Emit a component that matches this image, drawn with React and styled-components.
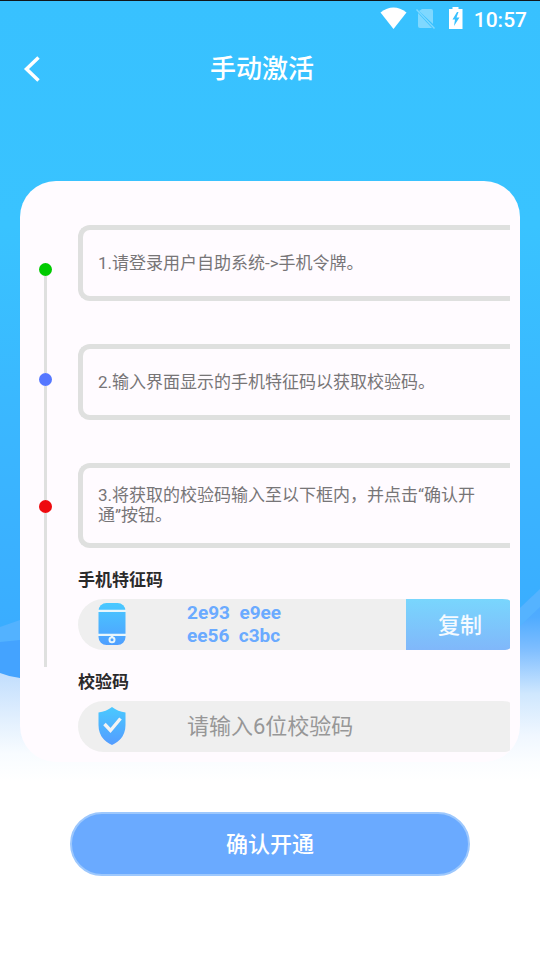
import React, { useState } from 'react';
import styled, { createGlobalStyle } from 'styled-components';

const GlobalStyle = createGlobalStyle`
  *, *::before, *::after {
    box-sizing: border-box;
  }

  body {
    margin: 0;
    background: #ffffff;
    font-family: Roboto, 'Noto Sans CJK SC', sans-serif;
  }

  h1, p, ol {
    margin: 0;
    padding: 0;
  }

  button, input {
    font-family: inherit;
  }
`;

const STEPS = [
  '1.请登录用户自助系统->手机令牌。',
  '2.输入界面显示的手机特征码以获取校验码。',
  '3.将获取的校验码输入至以下框内，并点击“确认开通”按钮。',
];

const FEATURE_CODE = ['2e93  e9ee', 'ee56  c3bc'];

function Scenery() {
  return (
    <Backdrop viewBox="0 0 540 800" preserveAspectRatio="none" aria-hidden="true">
      <defs>
        <linearGradient id="sky" x1="0" y1="0" x2="0" y2="1">
          <stop offset="0" stopColor="#38c1ff" />
          <stop offset="0.28" stopColor="#39c3ff" />
          <stop offset="0.5" stopColor="#3ab8ff" />
          <stop offset="0.78" stopColor="#3aadff" />
          <stop offset="1" stopColor="#3aadff" />
        </linearGradient>
        <linearGradient id="mist" gradientUnits="userSpaceOnUse" x1="0" y1="670" x2="0" y2="780">
          <stop offset="0" stopColor="#c0ddfd" />
          <stop offset="0.4" stopColor="#dfeefe" />
          <stop offset="0.75" stopColor="#f8fcff" />
          <stop offset="1" stopColor="#ffffff" />
        </linearGradient>
        <linearGradient id="slope" gradientUnits="userSpaceOnUse" x1="0" y1="590" x2="0" y2="780">
          <stop offset="0" stopColor="#45a7ff" />
          <stop offset="0.14" stopColor="#50acff" />
          <stop offset="0.3" stopColor="#7dbdff" />
          <stop offset="0.54" stopColor="#cfe7fe" />
          <stop offset="0.76" stopColor="#f0f7ff" />
          <stop offset="0.9" stopColor="#fbfdff" />
          <stop offset="1" stopColor="#ffffff" />
        </linearGradient>
      </defs>
      <rect width="540" height="800" fill="url(#sky)" />
      <path d="M0 626 L20 619 L270 560 V700 H0 Z" fill="#53b2ff" />
      <path d="M0 641 L20 639 L270 630 V720 H0 Z" fill="#44a3ff" />
      <path d="M0 672 Q10 676 20 677 L300 720 V800 H0 Z" fill="url(#mist)" />
      <path d="M270 800 V700 L520 607 L532 595 H540 V800 Z" fill="url(#slope)" />
      <path d="M520 607 L540 588 V606 L520 625 Z" fill="#55b3ff" />
    </Backdrop>
  );
}

function StatusIcons() {
  return (
    <svg width="84" height="28" viewBox="0 0 84 28" aria-hidden="true">
      <path d="M0.500 6.500 Q13.500 -3.500 26.500 6.500 L13.500 23 Z" fill="#ffffff" />
      <g fill="#7fd8ff">
        <path d="M42 3 H51 Q53 3 53 5 V18 L39 5 Z" />
        <path d="M38 7 L52 22 H40 Q38 22 38 20 Z" />
        <path d="M36 4 L37 3 L55 22 L54 23 Z" />
      </g>
      <path
        fillRule="evenodd"
        d="M72.500 1 H78.500 V3 H82.500 V23 H69 V3 H72.500 Z M77 6 L72.500 13.500 H75 L74 20 L79.500 11.500 H76.500 L78.500 6 Z"
        fill="#ffffff"
      />
    </svg>
  );
}

function PhoneIcon() {
  return (
    <svg width="28" height="44" viewBox="0 0 28 44" aria-hidden="true">
      <defs>
        <linearGradient id="phoneFill" x1="0" y1="0" x2="0" y2="1">
          <stop offset="0" stopColor="#49c9ff" />
          <stop offset="1" stopColor="#4f9fff" />
        </linearGradient>
      </defs>
      <rect x="0.500" y="1" width="27" height="42" rx="8" fill="url(#phoneFill)" />
      <path d="M0 8.800 H28 M0 32.800 H28" stroke="#e8f6fc" strokeWidth="2.200" />
      <path d="M14 33.500 V36" stroke="#e8f6fc" strokeWidth="2" />
      <circle cx="14" cy="37.800" r="2.500" fill="none" stroke="#e8f6fc" strokeWidth="2" />
    </svg>
  );
}

function ShieldIcon() {
  return (
    <svg width="28" height="40" viewBox="0 0 28 40" aria-hidden="true">
      <defs>
        <linearGradient id="shieldFill" x1="0" y1="0" x2="0" y2="1">
          <stop offset="0" stopColor="#49c9ff" />
          <stop offset="1" stopColor="#549cff" />
        </linearGradient>
      </defs>
      <path
        d="M14 1 Q20 5.500 27.500 6.500 V19 C27.500 29 22 35.500 14 39 C6 35.500 0.500 29 0.500 19 V6.500 Q8 5.500 14 1 Z"
        fill="url(#shieldFill)"
      />
      <path d="M6.500 18 L12.500 24.500 L22.500 12.500" fill="none" stroke="#f3f3f3" strokeWidth="3.400" />
    </svg>
  );
}

export default function App() {
  const [code, setCode] = useState('');

  const copyCode = () => {
    if (navigator.clipboard) {
      navigator.clipboard.writeText(FEATURE_CODE.join(' ').replace(/\s+/g, ''));
    }
  };

  return (
    <>
      <GlobalStyle />
      <Page>
        <Scenery />
        <StatusBar>
          <StatusIcons />
          <time>10:57</time>
        </StatusBar>
        <Header>
          <BackButton type="button" aria-label="返回">
            <svg width="18" height="28" viewBox="0 0 18 28" aria-hidden="true">
              <path
                d="M15.500 2.500 L3.500 14 L15.500 25.500"
                fill="none"
                stroke="#ffffff"
                strokeWidth="3.500"
              />
            </svg>
          </BackButton>
          <Title>手动激活</Title>
        </Header>

        <Form onSubmit={(e) => e.preventDefault()}>
          <Card>
            <Timeline aria-hidden="true">
              <Dot $color="#00cb00" />
              <Rail $length={97} />
              <Dot $color="#5577ff" />
              <Rail $length={114} />
              <Dot $color="#ee0a0e" />
              <Rail $length={154} />
            </Timeline>
            <Content>
              <Steps>
                {STEPS.map((text) => (
                  <Step key={text}>{text}</Step>
                ))}
              </Steps>

              <Label as="p">手机特征码</Label>
              <Field>
                <PhoneIcon />
                <FeatureCode>{FEATURE_CODE.join('\n')}</FeatureCode>
                <CopyButton type="button" onClick={copyCode}>复制</CopyButton>
              </Field>

              <Label htmlFor="verify">校验码</Label>
              <Field>
                <ShieldIcon />
                <CodeInput
                  id="verify"
                  placeholder="请输入6位校验码"
                  maxLength={6}
                  value={code}
                  onChange={(e) => setCode(e.target.value)}
                />
              </Field>
            </Content>
          </Card>
          <SubmitButton type="submit">确认开通</SubmitButton>
        </Form>
      </Page>
    </>
  );
}

const Page = styled.main`
  position: relative;
  isolation: isolate;
  min-height: 100vh;
  border-top: 1px solid #10161c;
`;

const Backdrop = styled.svg`
  position: absolute;
  top: 0;
  left: 0;
  z-index: -1;
  width: 100%;
  height: 800px;
`;

const StatusBar = styled.div`
  display: flex;
  align-items: center;
  justify-content: flex-end;
  gap: 10px;
  height: 38px;
  padding: 0 13px;
  color: #ffffff;
  font-size: 21px;
  font-weight: 500;
  line-height: 24px;
`;

const Header = styled.header`
  display: grid;
  grid-template-columns: 56px 1fr 72px;
  align-items: center;
  height: 60px;
  color: #ffffff;
`;

const BackButton = styled.button`
  display: flex;
  align-items: center;
  height: 60px;
  padding: 0 0 0 23px;
  border: none;
  background: none;
  cursor: pointer;
`;

const Title = styled.h1`
  font-size: 26px;
  font-weight: 500;
  line-height: 36px;
  text-align: center;
`;

const Form = styled.form`
  display: flex;
  flex-direction: column;
  gap: 50px;
  padding: 82px 20px;
`;

const Card = styled.div`
  display: flex;
  gap: 26px;
  padding: 44px 10px 10px 19px;
  border-radius: 36px;
  background: #fffbff;
`;

const Timeline = styled.div`
  display: flex;
  flex: none;
  flex-direction: column;
  align-items: center;
  width: 13px;
  padding-top: 38px;
`;

const Dot = styled.span`
  width: 13px;
  height: 13px;
  border-radius: 50%;
  background: ${({ $color }) => $color};
`;

const Rail = styled.span`
  width: 3px;
  height: ${({ $length }) => $length}px;
  background: #dfe0df;
`;

const Content = styled.div`
  flex: 1;
  min-width: 0;
`;

const Steps = styled.ol`
  display: flex;
  flex-direction: column;
  gap: 43px;
  list-style: none;
`;

const Step = styled.li`
  display: flex;
  align-items: center;
  min-height: 76px;
  padding: 17px 24px 18px 15px;
  border: 5px solid #dfe0df;
  border-right: none;
  border-radius: 12px 0 0 12px;
  color: #777577;
  font-size: 17px;
  line-height: 20px;
`;

const Label = styled.label`
  display: block;
  padding: 20px 0 7px;
  color: #2b2a2b;
  font-size: 17px;
  font-weight: 700;
  line-height: 24px;
`;

const Field = styled.div`
  display: flex;
  align-items: center;
  height: 51px;
  padding-left: 20px;
  overflow: hidden;
  border-radius: 26px 8px 8px 26px / 26px 2px 2px 26px;
  background: #efefef;

  svg {
    flex: none;
    margin: 0 61px 2px 0;
  }
`;

const FeatureCode = styled.p`
  flex: 1;
  padding-bottom: 2px;
  color: #6aaaff;
  font-size: 19px;
  font-weight: 700;
  line-height: 23px;
  white-space: pre;
`;

const CopyButton = styled.button`
  align-self: stretch;
  width: 104px;
  padding: 0 0 4px 4px;
  border: none;
  background: linear-gradient(#79d6fd, #80b7fa);
  color: #f5faff;
  font-size: 22px;
  font-weight: 500;
  cursor: pointer;
`;

const CodeInput = styled.input`
  flex: 1;
  align-self: stretch;
  min-width: 0;
  padding: 0;
  border: none;
  outline: none;
  background: transparent;
  color: #2b2a2b;
  font-size: 22px;

  &::placeholder {
    color: #979797;
    opacity: 1;
  }
`;

const SubmitButton = styled.button`
  height: 64px;
  margin: 0 50px;
  padding: 0 0 4px;
  border: 2px solid #9dc8fd;
  border-radius: 32px;
  background: #6aaaff;
  color: #ffffff;
  font-size: 22px;
  font-weight: 500;
  cursor: pointer;
`;
